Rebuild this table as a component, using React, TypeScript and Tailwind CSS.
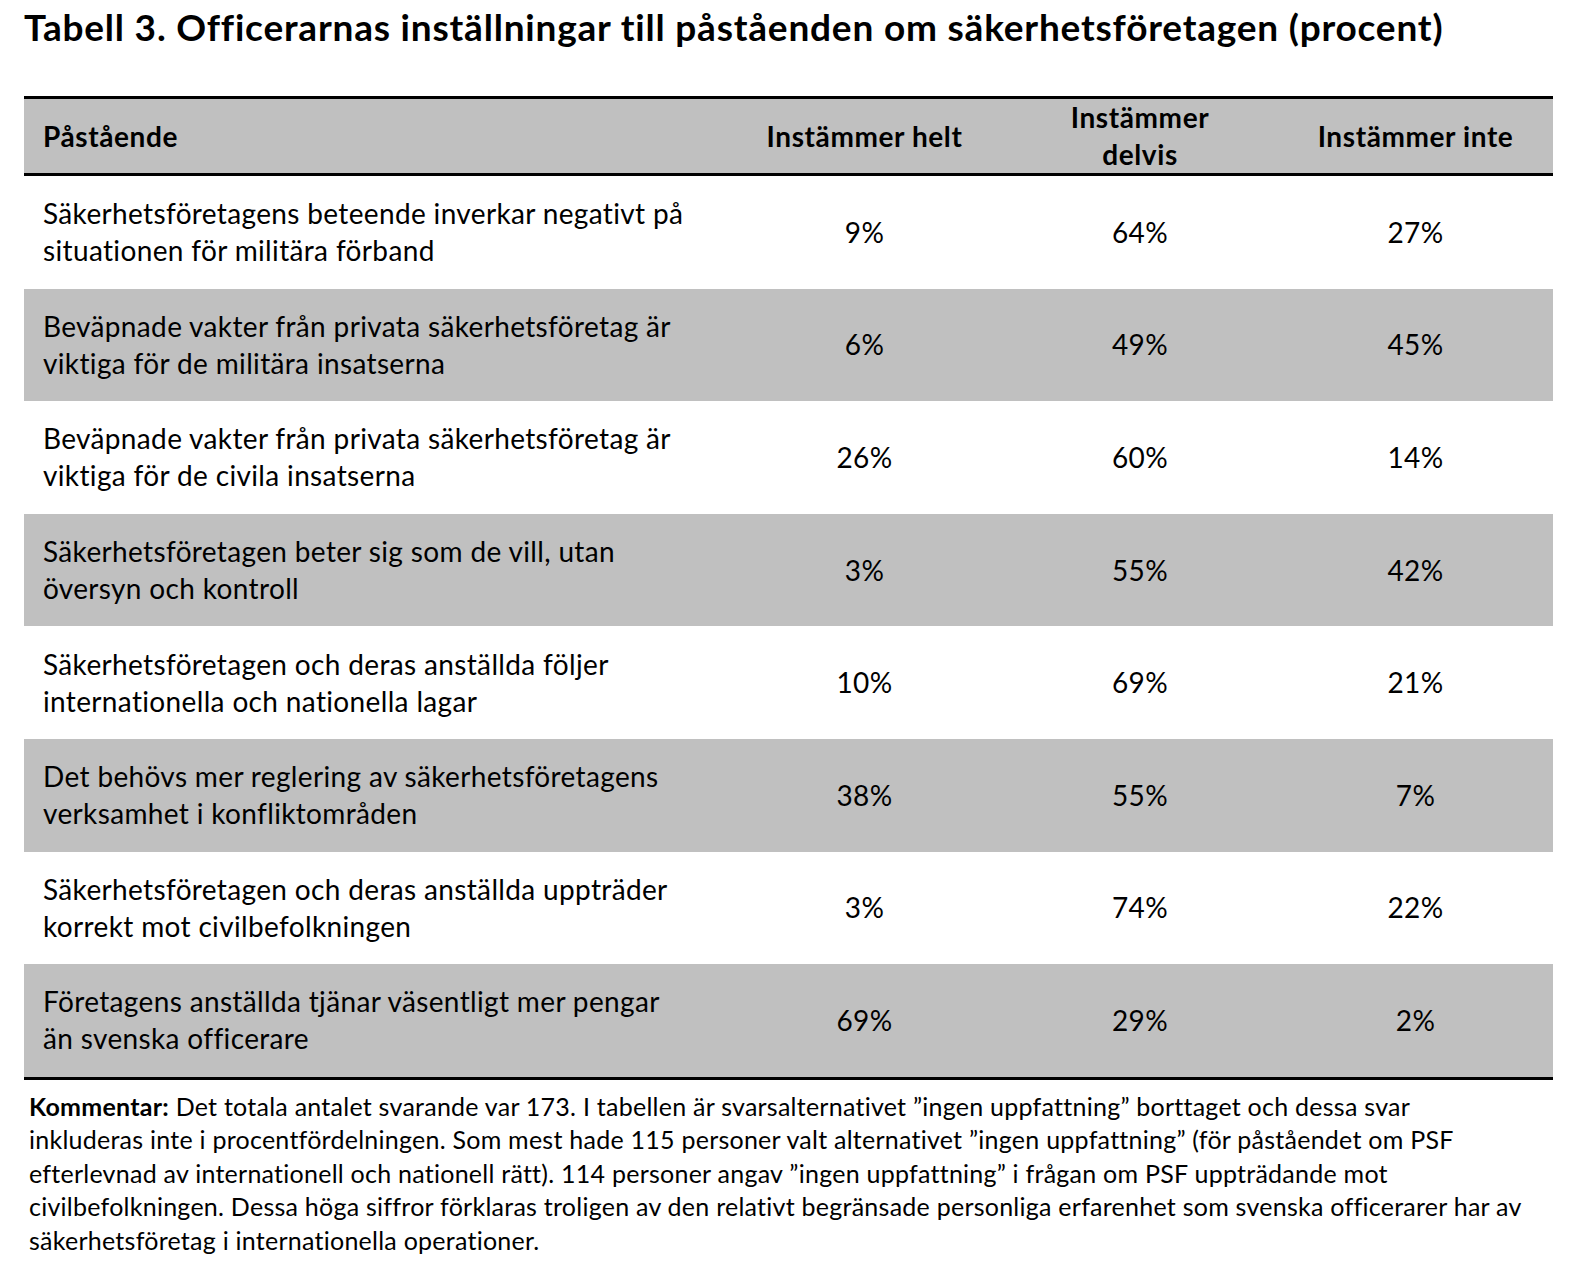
const rows = [
  ["Säkerhetsföretagens beteende inverkar negativt på", "situationen för militära förband", "9%", "64%", "27%"],
  ["Beväpnade vakter från privata säkerhetsföretag är", "viktiga för de militära insatserna", "6%", "49%", "45%"],
  ["Beväpnade vakter från privata säkerhetsföretag är", "viktiga för de civila insatserna", "26%", "60%", "14%"],
  ["Säkerhetsföretagen beter sig som de vill, utan", "översyn och kontroll", "3%", "55%", "42%"],
  ["Säkerhetsföretagen och deras anställda följer", "internationella och nationella lagar", "10%", "69%", "21%"],
  ["Det behövs mer reglering av säkerhetsföretagens", "verksamhet i konfliktområden", "38%", "55%", "7%"],
  ["Säkerhetsföretagen och deras anställda uppträder", "korrekt mot civilbefolkningen", "3%", "74%", "22%"],
  ["Företagens anställda tjänar väsentligt mer pengar", "än svenska officerare", "69%", "29%", "2%"],
];

export default function App() {
  return (
    <div className="w-[1572px] h-[1283px] bg-white text-black font-['Lato','Liberation_Sans',sans-serif]">
      <div className="pl-[24px] pt-[7px]">
        <h1 className="text-[37px] leading-[40px] font-bold tracking-[0.8px]">
          Tabell 3. Officerarnas inställningar till påståenden om säkerhetsföretagen (procent)
        </h1>
      </div>

      <div className="ml-[24px] mt-[49px] w-[1529px]">
        <div className="border-t-[3px] border-b-[3px] border-black bg-[#c0c0c0] h-[80px] grid grid-cols-[703px_275px_276px_275px] items-center text-[28px] leading-[37px] font-bold tracking-[0.6px]">
          <div className="pl-[19px]">Påstående</div>
          <div className="text-center">Instämmer helt</div>
          <div className="text-center">
            Instämmer
            <br />
            delvis
          </div>
          <div className="text-center">Instämmer inte</div>
        </div>

        {rows.map((r, i) => (
          <div
            key={i}
            className={
              "h-[112.6px] grid grid-cols-[703px_275px_276px_275px] items-center text-[28px] leading-[37px] tracking-[0.35px] " +
              (i % 2 === 1 ? "bg-[#c0c0c0]" : "bg-white")
            }
          >
            <div className="pl-[19px]">
              {r[0]}
              <br />
              {r[1]}
            </div>
            <div className="text-center">{r[2]}</div>
            <div className="text-center">{r[3]}</div>
            <div className="text-center">{r[4]}</div>
          </div>
        ))}
        <div className="border-t-[3px] border-black" />
      </div>

      <p className="ml-[29px] mt-[10px] w-[1530px] text-[25px] leading-[33.5px] tracking-[0.25px]">
        <span className="font-bold">Kommentar:</span> Det totala antalet svarande var 173. I tabellen är svarsalternativet ”ingen uppfattning” borttaget och dessa svar
        <br />
        inkluderas inte i procentfördelningen. Som mest hade 115 personer valt alternativet ”ingen uppfattning” (för påståendet om PSF
        <br />
        efterlevnad av internationell och nationell rätt). 114 personer angav ”ingen uppfattning” i frågan om PSF uppträdande mot
        <br />
        civilbefolkningen. Dessa höga siffror förklaras troligen av den relativt begränsade personliga erfarenhet som svenska officerarer har av
        <br />
        säkerhetsföretag i internationella operationer.
      </p>
    </div>
  );
}
